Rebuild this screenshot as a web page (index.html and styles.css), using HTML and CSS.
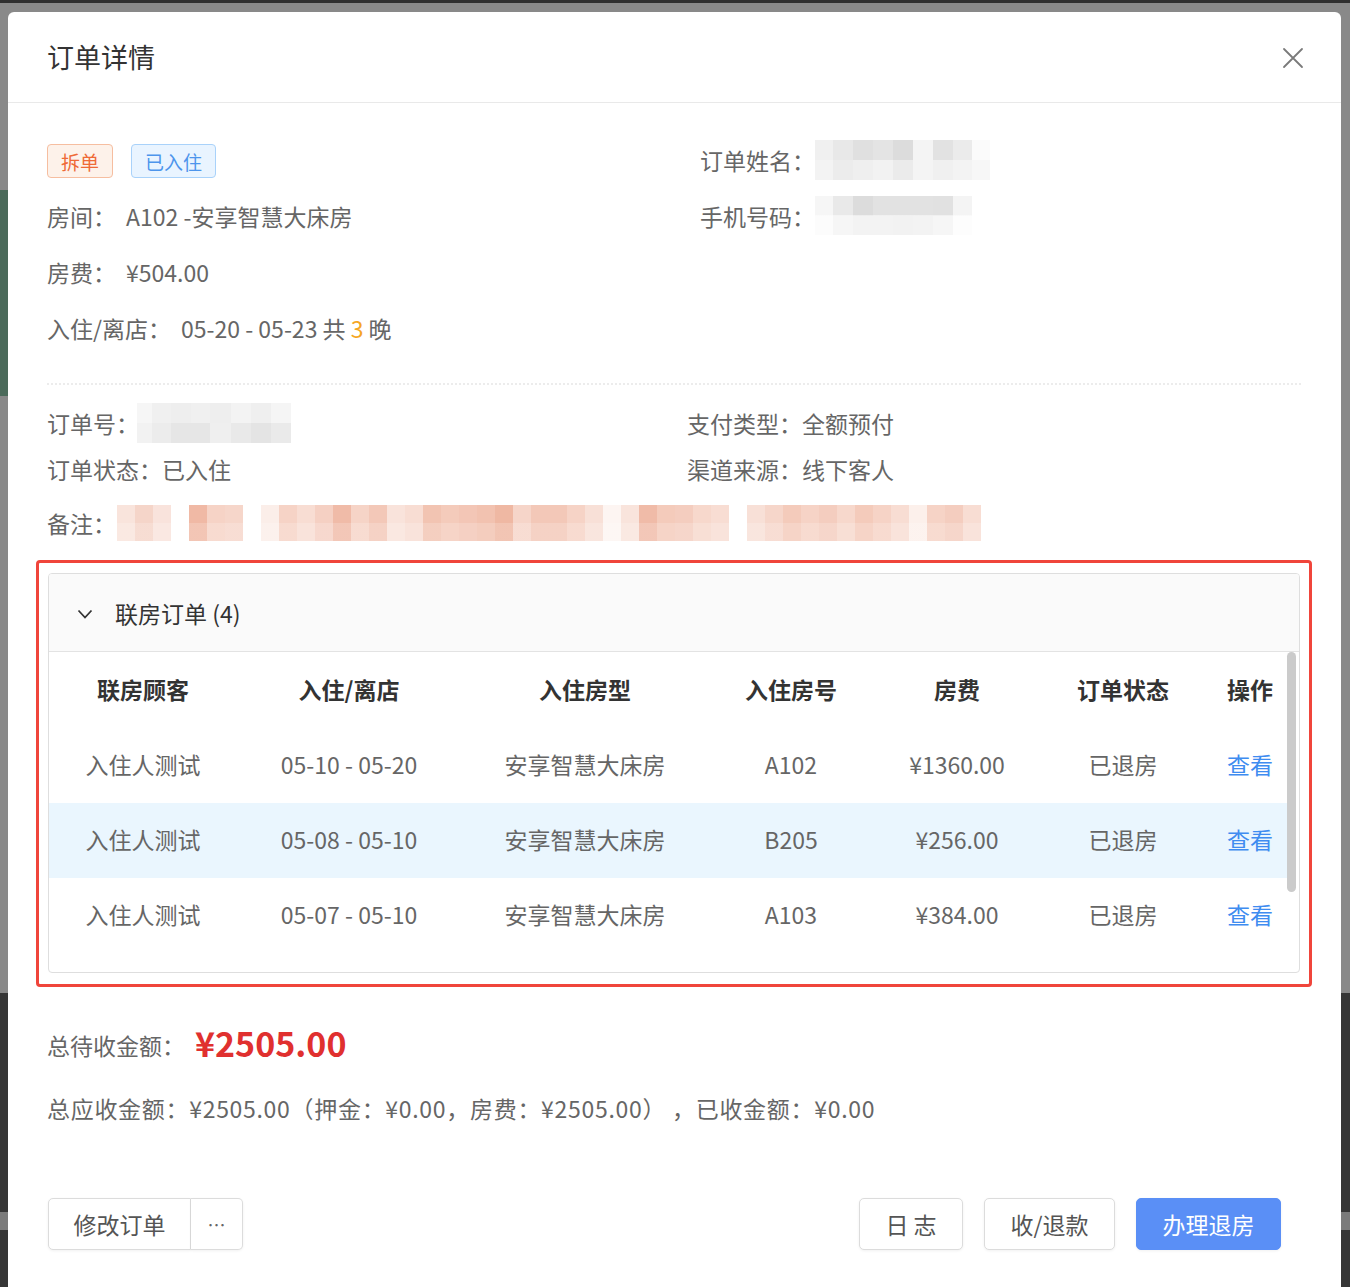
FILE: index.html
```html
<!DOCTYPE html>
<html lang="zh-CN">
<head>
  <meta charset="UTF-8">
  <title>订单详情</title>
  <link rel="stylesheet" href="styles.css">
</head>
<body>
  <div class="modal">
    <div class="modal-head">
      <h2 class="modal-title">订单详情</h2>
      <svg class="close" viewBox="0 0 22 22" width="22" height="22">
        <path d="M2 2 L20 20 M20 2 L2 20" stroke="#7a7a7a" stroke-width="1.8" fill="none" stroke-linecap="round"/>
      </svg>
    </div>

    <div class="modal-body">
      <div class="info-top">
        <div>
          <div class="line line-tags">
            <span class="tag tag-split">拆单</span>
            <span class="tag tag-in">已入住</span>
          </div>
          <div class="line"><span class="lbl">房间：</span><span class="val">A102 -安享智慧大床房</span></div>
          <div class="line"><span class="lbl">房费：</span><span class="val">¥504.00</span></div>
          <div class="line"><span class="lbl">入住/离店：</span><span class="val">05-20 - 05-23 共 <em class="nights">3</em> 晚</span></div>
        </div>
        <div>
          <div class="line"><span class="lbl">订单姓名：</span><span class="mosaic mosaic-name"></span></div>
          <div class="line"><span class="lbl">手机号码：</span><span class="mosaic mosaic-phone"></span></div>
        </div>
      </div>

      <div class="divider"></div>

      <div class="info-mid">
        <div class="row"><span class="lbl">订单号：</span><span class="mosaic mosaic-no"></span></div>
        <div class="row"><span class="lbl">支付类型：</span><span class="val">全额预付</span></div>
        <div class="row"><span class="lbl">订单状态：</span><span class="val">已入住</span></div>
        <div class="row"><span class="lbl">渠道来源：</span><span class="val">线下客人</span></div>
      </div>
      <div class="remark"><span class="lbl">备注：</span><span class="mosaic mosaic-remark"></span></div>

      <div class="mark-box">
        <div class="panel">
          <div class="panel-head">
            <svg class="chevron" viewBox="0 0 16 10" width="16" height="10">
              <path d="M1.5 1.5 L8 8.5 L14.5 1.5" stroke="#333" stroke-width="1.8" fill="none"/>
            </svg>
            <span>联房订单 (4)</span>
          </div>
          <div class="panel-scroll">
            <div class="table-wrap">
              <table class="rooms">
                <thead>
                  <tr><th>联房顾客</th><th>入住/离店</th><th>入住房型</th><th>入住房号</th><th>房费</th><th>订单状态</th><th>操作</th></tr>
                </thead>
                <tbody>
                  <tr><td>入住人测试</td><td>05-10 - 05-20</td><td>安享智慧大床房</td><td>A102</td><td>¥1360.00</td><td>已退房</td><td><a class="link">查看</a></td></tr>
                  <tr class="active"><td>入住人测试</td><td>05-08 - 05-10</td><td>安享智慧大床房</td><td>B205</td><td>¥256.00</td><td>已退房</td><td><a class="link">查看</a></td></tr>
                  <tr><td>入住人测试</td><td>05-07 - 05-10</td><td>安享智慧大床房</td><td>A103</td><td>¥384.00</td><td>已退房</td><td><a class="link">查看</a></td></tr>
                </tbody>
              </table>
            </div>
            <div class="scroll-track"><div class="scroll-thumb"></div></div>
          </div>
        </div>
      </div>

      <div class="summary">
        <div class="sum-main"><span class="lbl">总待收金额：</span><span class="amount">¥2505.00</span></div>
        <div class="sum-detail">总应收金额：¥2505.00（押金：¥0.00，房费：¥2505.00） ，已收金额：¥0.00</div>
      </div>

      <div class="footer">
        <div class="btn-group">
          <button class="btn">修改订单</button>
          <button class="btn btn-more">…</button>
        </div>
        <div class="actions">
          <button class="btn btn-log">日 志</button>
          <button class="btn btn-pay">收/退款</button>
          <button class="btn btn-primary">办理退房</button>
        </div>
      </div>
    </div>
  </div>
</body>
</html>
```

FILE: styles.css
```css
html, body { margin: 0; height: 100%; overflow: hidden; }
body {
  font-family: "Noto Sans CJK SC", "Liberation Sans", sans-serif;
  color: #666;
  background:
    linear-gradient(#4b6a5a, #4b6a5a) 0 190px / 8px 206px no-repeat,
    linear-gradient(to bottom, #2f2f2f 0 3px, #898989 3px 993px, #363636 993px 1212px, #7b7b7b 1212px 1230px, #363636 1230px);
}
button { font-family: inherit; }

.modal { margin: 12px 9px 0 8px; background: #fff; border-radius: 6px 6px 0 0; padding-bottom: 60px; }
.modal-head { height: 90px; border-bottom: 1px solid #e9e9e9; display: flex; align-items: center; justify-content: space-between; padding: 0 37px 0 39px; }
.modal-title { margin: 0; font-size: 27px; font-weight: normal; color: #333; margin-top: -1px; }
.close { margin-top: 2px; }

.modal-body { padding: 30px 40px 0 39px; font-size: 23px; }
.lbl { color: #666; }
.val { color: #666; }

.info-top { display: grid; grid-template-columns: 653px 1fr; }
.line { height: 56px; box-sizing: border-box; padding-bottom: 3px; display: flex; align-items: center; }
.line-tags { padding-bottom: 0; }
.info-top .line .val { margin-left: 10px; }
.nights { font-style: normal; color: #f5a623; }

.tag { display: inline-flex; align-items: center; height: 32px; padding: 0 13px; font-size: 19px; border-radius: 4px; border: 1px solid; }
.tag-split { color: #ef6a36; background: #fdf2ea; border-color: #f6bea0; }
.tag-in { color: #4d95ec; background: #e9f4ff; border-color: #a9d2fa; margin-left: 18px; }

.divider { border-top: 2px dotted #ececec; margin: 26px 0 0 0; }

.info-mid { display: grid; grid-template-columns: 640px 1fr; padding-top: 15px; }
.info-mid .row { height: 46px; display: flex; align-items: center; }
.remark { display: flex; align-items: center; height: 44px; margin-top: 9px; }

.mosaic { display: inline-block; vertical-align: middle; }
.mosaic-name {
  width: 175px; height: 40px;
  background:
    linear-gradient(to right, #f0f0f0 0 18px, #e8e8e8 18px 38px, #e0e0e0 38px 58px, #e4e4e4 58px 78px, #dcdcdc 78px 98px, #f4f4f4 98px 118px, #e2e2e2 118px 138px, #ebebeb 138px 157px, #fbfbfb 157px) top / 100% 50% no-repeat,
    linear-gradient(to right, #f3f3f3 0 18px, #ececec 18px 38px, #efefef 38px 58px, #f2f2f2 58px 78px, #ebebeb 78px 98px, #f4f4f4 98px 118px, #f0f0f0 118px 138px, #f3f3f3 138px 157px, #f7f7f7 157px) bottom / 100% 50% no-repeat;
}
.mosaic-phone {
  width: 157px; height: 39px;
  background:
    linear-gradient(to right, #f6f6f6 0 18px, #e9e9e9 18px 38px, #dcdcdc 38px 58px, #e2e2e2 58px 78px, #e2e2e2 78px 98px, #e2e2e2 98px 118px, #e1e1e1 118px 138px, #f4f4f4 138px) top / 100% 50% no-repeat,
    linear-gradient(to right, #fcfcfc 0 18px, #f6f6f6 18px 38px, #f3f3f3 38px 58px, #f3f3f3 58px 78px, #f2f2f2 78px 98px, #f3f3f3 98px 118px, #f6f6f6 118px 138px, #fdfdfd 138px) bottom / 100% 50% no-repeat;
}
.mosaic-no {
  width: 154px; height: 40px; margin-left: -2px;
  background:
    linear-gradient(to right, #f6f6f6 0 15px, #f0f0f0 15px 34px, #eeeeee 34px 54px, #f0f0f0 54px 73px, #eeeeee 73px 94px, #f3f3f3 94px 114px, #efefef 114px 134px, #f5f5f5 134px) top / 100% 50% no-repeat,
    linear-gradient(to right, #f2f2f2 0 15px, #ececec 15px 34px, #e6e6e6 34px 54px, #e6e6e6 54px 73px, #efefef 73px 94px, #e9e9e9 94px 114px, #e4e4e4 114px 134px, #eaeaea 134px) bottom / 100% 50% no-repeat;
}
.mosaic-remark {
  width: 864px; height: 36px; margin-left: 1px;
  background:
    linear-gradient(to bottom, transparent 50%, rgba(255,255,255,0.18) 50%),
    linear-gradient(to right,
      #f9e4dc 0 18px, #f5d5c9 18px 36px, #f9e3dc 36px 54px, #fff 54px 72px, #f0b9a5 72px 90px, #f6d3c6 90px 108px,
      #f6d6ca 108px 126px, #fff 126px 144px, #fbeee9 144px 162px, #f6d3c6 162px 180px, #f8ddd3 180px 198px, #f5d0c3 198px 216px,
      #f0bba8 216px 234px, #f6d4c7 234px 252px, #f3c8b8 252px 270px, #f9e3db 270px 288px, #f8ddd3 288px 306px, #f2c4b2 306px 324px,
      #f4cbbb 324px 342px, #f3c6b6 342px 360px, #f2c2b0 360px 378px, #efb8a3 378px 396px, #f6d5c9 396px 414px, #f3c8b8 414px 432px,
      #f3c8b8 432px 450px, #f6d3c6 450px 468px, #f8e0d7 468px 486px, #fdf5f2 486px 504px, #f9e4dc 504px 522px, #f0bba8 522px 540px,
      #f4cbbb 540px 558px, #f4cdbf 558px 576px, #f7d8cc 576px 594px, #f8ddd3 594px 612px, #fff 612px 630px, #f8e0d7 630px 648px,
      #f6d6ca 648px 666px, #f4cbbb 666px 684px, #f6d3c6 684px 702px, #f4cdbf 702px 720px, #f7d8cc 720px 738px, #f4cbbb 738px 756px,
      #f6d3c6 756px 774px, #f8ddd3 774px 792px, #fcf0eb 792px 810px, #f6d3c6 810px 828px, #f4cdbf 828px 846px, #f8ddd3 846px 864px);
}

.mark-box { margin: 15px -11px 0 -11px; border: 3px solid #f0453b; border-radius: 4px; padding: 10px 9px 11px 9px; }
.panel { border: 1px solid #dedede; border-radius: 4px; overflow: hidden; }
.panel-head { height: 77px; background: #fafafa; border-bottom: 1px solid #e3e3e3; display: flex; align-items: center; padding-left: 28px; color: #333; }
.chevron { margin-right: 22px; margin-top: 2px; }

.panel-scroll { height: 320px; display: flex; overflow: hidden; }
.table-wrap { flex: 1; }
.scroll-track { width: 12px; }
.scroll-thumb { width: 9px; height: 240px; background: #cbcbcb; border-radius: 5px; }

.rooms { width: 100%; border-collapse: collapse; table-layout: fixed; }
.rooms th { height: 73px; font-weight: bold; color: #333; }
.rooms td { height: 72px; color: #666; }
.rooms th, .rooms td { text-align: center; padding: 0 0 3px 0; }
.rooms th:last-child, .rooms td:last-child { padding-left: 8px; }
.rooms th:nth-child(1) { width: 188px; }
.rooms th:nth-child(2) { width: 224px; }
.rooms th:nth-child(3) { width: 248px; }
.rooms th:nth-child(4) { width: 164px; }
.rooms th:nth-child(5) { width: 168px; }
.rooms th:nth-child(6) { width: 164px; }
.rooms tr.active td { background: #eaf6fe; }
.link { color: #3f8cf0; cursor: pointer; }

.summary { padding-top: 30px; }
.sum-main { height: 56px; display: flex; align-items: center; }
.amount { color: #e0302f; font-size: 34px; font-weight: bold; margin-left: 10px; margin-top: -5px; }
.sum-detail { height: 52px; display: flex; align-items: center; margin-top: 9px; color: #666; white-space: pre; letter-spacing: 0.7px; }

.footer { display: flex; justify-content: space-between; margin-top: 64px; padding-right: 20px; }
.btn { height: 52px; font-size: 23px; color: #555; background: #fff; border: 1px solid #dcdcdc; border-radius: 5px; padding: 0; cursor: pointer; box-shadow: 0 1px 3px rgba(0,0,0,0.06); }
.btn-group { display: flex; margin-left: 1px; }
.btn-group .btn { border-radius: 5px 0 0 5px; width: 143px; }
.btn-group .btn-more { border-radius: 0 5px 5px 0; border-left: none; width: 52px; font-size: 18px; color: #666; }
.actions { display: flex; gap: 21px; }
.btn-log { width: 104px; }
.btn-pay { width: 131px; }
.btn-primary { width: 145px; background: #5a8ff6; border-color: #5a8ff6; color: #fff; }
```
